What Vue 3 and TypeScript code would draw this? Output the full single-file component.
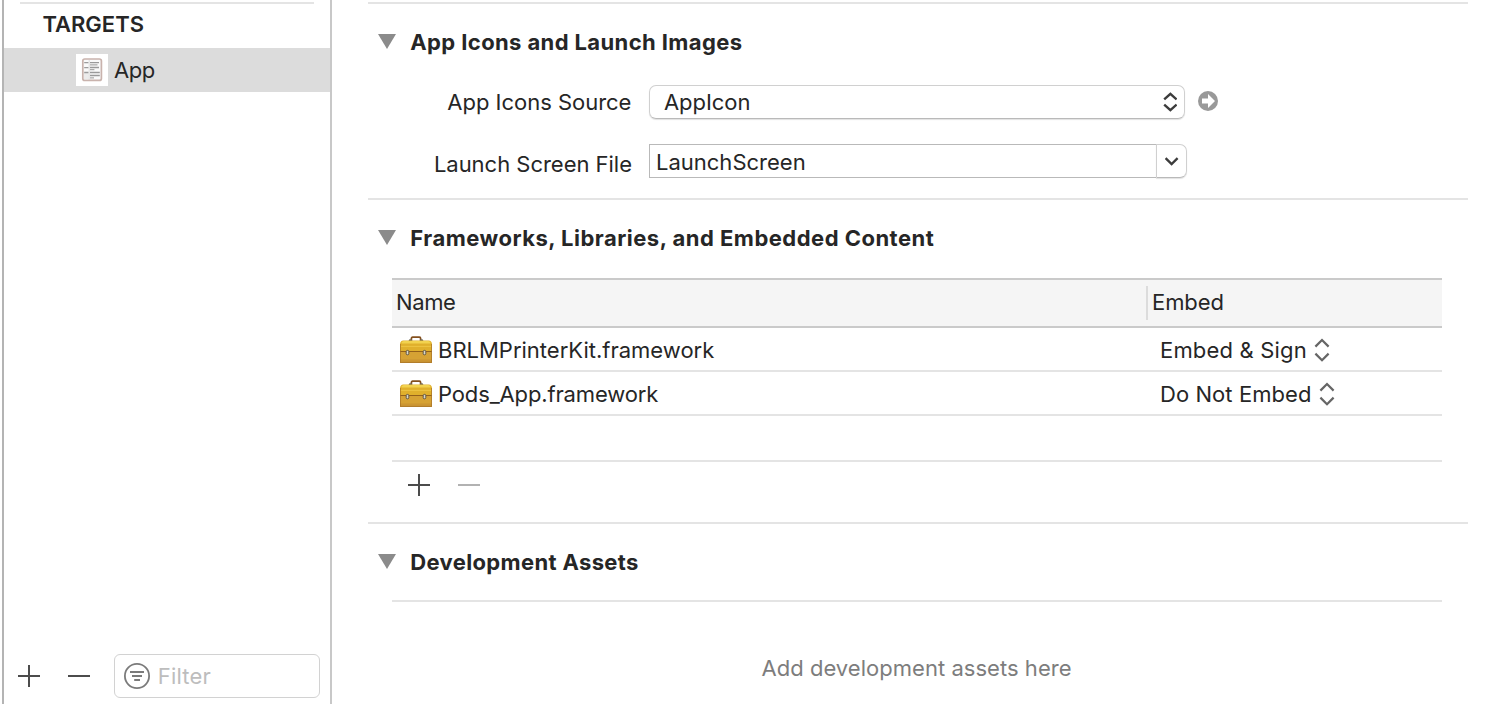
<script setup lang="ts">
import { ref } from 'vue'

interface Framework {
  name: string
  embed: string
  key: string
}

const frameworks: Framework[] = [
  { name: 'BRLMPrinterKit.framework', embed: 'Embed & Sign', key: 'printer' },
  { name: 'Pods_App.framework', embed: 'Do Not Embed', key: 'pods' },
]

const iconSource = ref('AppIcon')
const launchScreen = ref('LaunchScreen')
</script>

<template>
  <div class="window">
    <aside class="sidebar">
      <div class="sidebar-rule"></div>
      <h2 class="sidebar-title">TARGETS</h2>
      <div class="target">
        <svg class="target-icon" width="32" height="32" viewBox="0 0 32 32">
          <rect width="32" height="32" fill="#fff" />
          <rect x="6.8" y="5" width="18.6" height="21.4" rx="2" fill="#fafafa" stroke="#c9b3ad" stroke-width="1.7" />
          <rect x="8" y="18" width="4.6" height="7.4" fill="#ececec" />
          <path d="M13.2 6v20" stroke="#d8d8d8" stroke-width=".8" />
          <path d="M8.2 8.6h4.2M8.2 13.6h4.2M8.2 18.5h4.2" stroke="#9c9c9c" stroke-width="1.4" />
          <path d="M14 8.6h9M14 13.5h9M14 18.5h9.8M14 21.5h9.8" stroke="#9a9a9a" stroke-width="1.4" />
          <path d="M14 10.8h7.5M14 15.6h4.4M14 23.8h4" stroke="#ababab" stroke-width="1.3" />
        </svg>
        <span class="target-name">App</span>
      </div>
      <div class="sidebar-footer">
        <svg class="tool" width="22" height="22" viewBox="0 0 22 22"><path d="M0 11h22M11 0v22" stroke="#4c4c4c" stroke-width="2" /></svg>
        <svg class="tool" width="22" height="22" viewBox="0 0 22 22"><path d="M0 11h22" stroke="#4c4c4c" stroke-width="2" /></svg>
        <div class="filter">
          <svg width="26" height="26" viewBox="0 0 26 26" fill="none" stroke="#7b7b7b">
            <circle cx="13" cy="13" r="12.1" stroke-width="1.8" />
            <path d="M6 9h14M8 13h10M10.2 17h5.8" stroke-width="1.8" />
          </svg>
          <span class="filter-text">Filter</span>
        </div>
      </div>
    </aside>

    <main class="content">
      <section class="section icons-section">
        <h3 class="heading">
          <svg class="triangle" width="18" height="15" viewBox="0 0 18 15"><path d="M0 0h18L9 15z" fill="#8b8b8b" /></svg>
          <span class="wide">App Icons and Launch Images</span>
        </h3>
        <div class="field source-field">
          <span class="label source-label">App Icons Source</span>
          <div class="select">
            <span class="select-value">{{ iconSource }}</span>
            <svg width="14" height="20" viewBox="0 0 14 20" fill="none" stroke="#3c3c3c" stroke-width="2.4">
              <path d="M1.2 7.4 7.4 1.8l6.2 5.6M1.2 12.6l6.2 5.6 6.2-5.6" />
            </svg>
          </div>
          <svg class="go" width="20" height="20" viewBox="0 0 20 20">
            <circle cx="10" cy="10" r="10" fill="#999" />
            <path d="M4 7.4h6V3l7 7-7 7v-4.4H4z" fill="#fff" />
          </svg>
        </div>
        <div class="field launch-field">
          <span class="label launch-label">Launch Screen File</span>
          <div class="combo">
            <span class="combo-value">{{ launchScreen }}</span>
            <span class="combo-button">
              <svg width="14" height="9" viewBox="0 0 14 9" fill="none" stroke="#3c3c3c" stroke-width="2.4"><path d="M.6 1.2 6.6 7l6-5.8" /></svg>
            </span>
          </div>
        </div>
      </section>

      <section class="section frameworks-section">
        <h3 class="heading">
          <svg class="triangle" width="18" height="15" viewBox="0 0 18 15"><path d="M0 0h18L9 15z" fill="#8b8b8b" /></svg>
          <span class="wider">Frameworks, Libraries, and Embedded Content</span>
        </h3>
        <div class="table">
          <div class="row head">
            <span class="name-column">Name</span>
            <span class="divider"></span>
            <span class="embed-head">Embed</span>
          </div>
          <div v-for="item in frameworks" :key="item.key" class="row">
            <div class="name-cell">
              <svg class="toolbox" width="32" height="28" viewBox="0 0 32 28">
                <path d="M11.4 4.5V2.4Q11.4 1.2 12.6 1.2h6.8Q20.6 1.2 20.6 2.4v2.1" fill="none" stroke="#84501f" stroke-width="1.7" />
                <path d="M8.4 5.2 9.4 3.2h2.2L12.6 5.2zM19.4 5.2l1-2h2.2l1 2z" fill="#6f6a60" />
                <path d="M0 15V8Q.4 5 3.2 4.6h25.6Q31.6 5 32 8V15z" fill="#e0b02c" />
                <path d="M1.6 6.4Q2.4 5 4 5h24q1.6 0 2.4 1.4v1.2H1.6z" fill="#f2d24e" />
                <path d="M1 10.4h30" stroke="#edc444" />
                <path d="M0 15h32v12H0z" fill="#d6a234" />
                <path d="M0 23.4h32V27H0z" fill="#cc9633" />
                <path d="M0 15.5h32" stroke="#94611b" stroke-width="1" />
                <path d="M.4 8v18.4h31.2V8" fill="none" stroke="#a8742a" stroke-width=".8" />
                <rect x="6.2" y="14.4" width="2.6" height="4.4" rx="1.2" fill="#d8d7cc" stroke="#5d5443" stroke-width="1" />
                <rect x="23.2" y="14.4" width="2.6" height="4.4" rx="1.2" fill="#d8d7cc" stroke="#5d5443" stroke-width="1" />
              </svg>
              <span :class="item.key">{{ item.name }}</span>
            </div>
            <div class="embed-cell">
              <span :class="['embed-value', 'embed-' + item.key]">{{ item.embed }}</span>
              <svg width="16" height="24" viewBox="0 0 16 24" fill="none" stroke="#666" stroke-width="2.2">
                <path d="M1.4 8.6 8 2l6.6 6.6M1.4 15.6 8 22.2l6.6-6.6" />
              </svg>
            </div>
          </div>
          <div class="row empty"></div>
        </div>
        <div class="table-tools">
          <svg class="tool" width="22" height="22" viewBox="0 0 22 22"><path d="M0 11h22M11 0v22" stroke="#4c4c4c" stroke-width="2" /></svg>
          <svg class="tool" width="22" height="22" viewBox="0 0 22 22"><path d="M0 11h22" stroke="#b2b2b2" stroke-width="2" /></svg>
        </div>
      </section>

      <section class="section assets-section">
        <h3 class="heading">
          <svg class="triangle" width="18" height="15" viewBox="0 0 18 15"><path d="M0 0h18L9 15z" fill="#8b8b8b" /></svg>
          <span class="assets-title">Development Assets</span>
        </h3>
        <div class="assets">Add development assets here</div>
      </section>
    </main>
  </div>
</template>

<style>
body { background: #fff; overflow: hidden; }
</style>

<style scoped>
* { box-sizing: border-box; }
svg { display: block; flex: none; }
.window {
  display: flex;
  width: 1504px;
  height: 704px;
  overflow: hidden;
  background: #fff;
  color: #262626;
  font: 22px/28px Inter, "Liberation Sans", sans-serif;
  white-space: nowrap;
}

.sidebar {
  display: flex;
  flex-direction: column;
  width: 330px;
  margin-left: 2px;
  padding-top: 2px;
  border-left: 2px solid #b4b4b4;
  border-right: 2px solid #c8c8c8;
}
.sidebar-rule { height: 2px; margin: 0 16px; background: #e4e4e4; }
.sidebar-title { margin: 6px 0 10px 38.4px; font-size: 22px; font-weight: 600; letter-spacing: 0; }
.target { display: flex; align-items: center; height: 44px; padding-left: 72px; background: #dcdcdc; }
.target-name { margin-left: 6px; letter-spacing: -0.4px; }
.sidebar-footer { display: flex; align-items: center; margin-top: auto; padding: 0 10px 6px 14px; }
.sidebar-footer .tool + .tool { margin-left: 28px; }
.filter {
  display: flex;
  align-items: center;
  width: 206px;
  height: 44px;
  margin-left: 24px;
  padding-left: 9px;
  border: 1px solid #d2d2d2;
  border-radius: 6px;
}
.filter-text { margin-left: 7.7px; color: #bdbdbd; letter-spacing: 0.22px; }

.content { width: 1100px; margin: 2px 0 0 36px; }
.section { border-top: 2px solid #e4e4e4; }
.icons-section { height: 196px; padding-top: 24px; }
.frameworks-section { height: 324px; padding-top: 24px; }
.assets-section { height: 182px; padding-top: 24px; }
.heading { display: flex; align-items: center; height: 28px; margin: 0; padding-left: 10px; font-size: 22px; font-weight: 700; }
.triangle { margin: 0 14.3px 1px 0; }
.wide { letter-spacing: 0.39px; }
.wider { letter-spacing: 0.485px; }
.assets-title { letter-spacing: 0.35px; }

.field { display: flex; align-items: center; height: 34px; }
.source-field { margin-top: 29px; }
.launch-field { margin-top: 25px; }
.label { width: 264px; margin-right: 17px; text-align: right; letter-spacing: -0.02px; }
.source-label { padding-right: 0.6px; }
.launch-label { padding-top: 6px; }
.select {
  display: flex;
  align-items: center;
  justify-content: space-between;
  width: 536px;
  height: 34px;
  padding: 0 7px 0 14px;
  border: 1px solid #d0d0d0;
  border-bottom-color: #b9b9b9;
  border-radius: 7px;
  box-shadow: 0 1px 1px rgba(0, 0, 0, 0.12);
}
.select-value { letter-spacing: -0.06px; }
.go { margin: 0 0 2px 13px; }
.combo { display: flex; width: 538px; height: 34px; }
.combo-value { flex: 1; padding-left: 6px; border: 1px solid #b9b9b9; border-right: 0; line-height: 34px; }
.combo-button {
  display: flex;
  align-items: center;
  justify-content: center;
  width: 31px;
  height: 34px;
  border: 1px solid #d0d0d0;
  border-bottom-color: #b9b9b9;
  border-radius: 0 7px 7px 0;
  box-shadow: 0 1px 1px rgba(0, 0, 0, 0.12);
}

.table { width: 1050px; margin: 26px 0 0 24px; border-top: 2px solid #cacaca; }
.row { display: flex; align-items: center; height: 44px; border-bottom: 2px solid #e4e4e4; }
.row.head { height: 48px; border-bottom-color: #cacaca; background: #f5f5f5; }
.row.empty { height: 46px; }
.name-column { width: 754px; padding-left: 4px; letter-spacing: -0.4px; }
.head .name-column, .embed-head { padding-bottom: 2px; }
.divider { width: 2px; height: 34px; background: #dcdcdc; }
.embed-head { margin-left: 4px; letter-spacing: -0.07px; }
.name-cell { display: flex; align-items: center; width: 768px; padding-left: 8px; }
.toolbox { margin: 2px 6px 0 0; }
.printer { letter-spacing: 0; }
.pods { letter-spacing: -0.14px; }
.name-cell span, .embed-value { padding-top: 2px; }
.embed-cell { display: flex; align-items: center; }
.embed-cell svg { margin: 2px 0 0 7.1px; }
.embed-printer { letter-spacing: 0.18px; }
.embed-pods { letter-spacing: 0.07px; }
.table-tools { display: flex; gap: 28px; padding: 12px 0 0 40px; }

.assets {
  width: 1050px;
  margin: 24px 0 0 24px;
  padding: 52px 1px 0 0;
  border-top: 2px solid #e4e4e4;
  color: #7d7d7d;
  text-align: center;
  letter-spacing: 0.035px;
}
</style>
